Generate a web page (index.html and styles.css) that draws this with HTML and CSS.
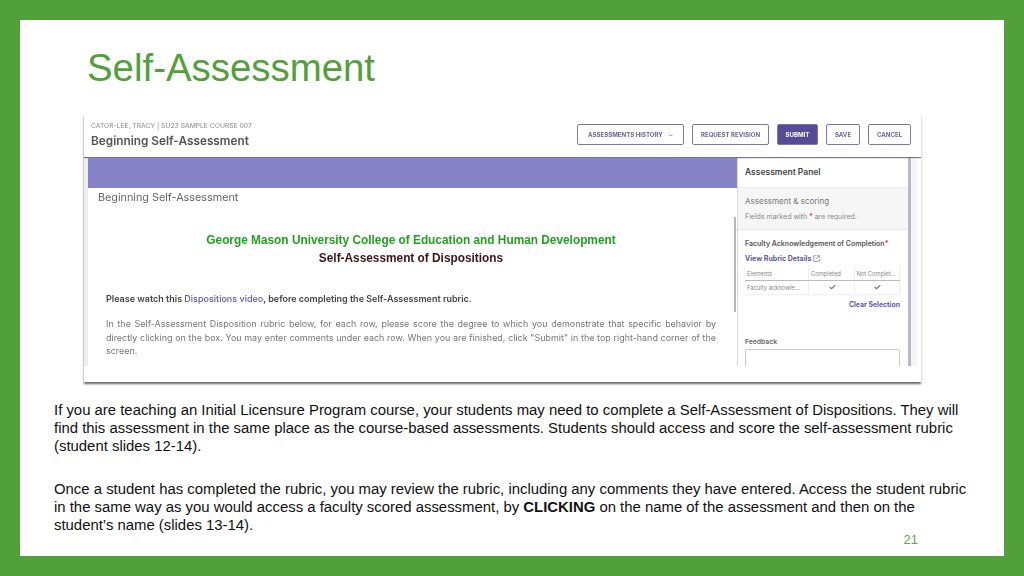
FILE: index.html
```html
<!DOCTYPE html>
<html lang="en">
<head>
    <meta charset="UTF-8">
    <title>Self-Assessment</title>
    <link rel="stylesheet" href="styles.css">
</head>
<body>

<div class="slide">
    <h1 class="slide-title">Self-Assessment</h1>

    <!-- Screenshot of the assessment page -->
    <div class="shot">
        <div class="shot-top">
            <div class="shot-names">
                <div class="crumb">CATOR-LEE, TRACY | SU23 SAMPLE COURSE 007</div>
                <div class="shot-heading">Beginning Self-Assessment</div>
            </div>
            <div class="actions">
                <span class="btn btn-history">ASSESSMENTS HISTORY <i class="caret">~</i></span>
                <span class="btn btn-revision">REQUEST REVISION</span>
                <span class="btn btn-submit">SUBMIT</span>
                <span class="btn btn-save">SAVE</span>
                <span class="btn btn-cancel">CANCEL</span>
            </div>
        </div>

        <div class="shot-body">
            <div class="main">
                <div class="purple-bar"></div>
                <div class="main-title">Beginning Self-Assessment</div>
                <div class="gmu">George Mason University College of Education and Human Development</div>
                <div class="gmu-sub">Self-Assessment of Dispositions</div>
                <p class="watch">Please watch this <span class="link">Dispositions video</span>, before completing the Self-Assessment rubric.</p>
                <p class="intro">In the Self-Assessment Disposition rubric below, for each row, please score the degree to which you demonstrate that specific behavior by directly clicking on the box. You may enter comments under each row. When you are finished, click "Submit" in the top right-hand corner of the screen.</p>
                <div class="scroll-thumb"></div>
            </div>

            <div class="panel">
                <div class="panel-title">Assessment Panel</div>
                <div class="panel-head">
                    <div class="panel-sub">Assessment &amp; scoring</div>
                    <div class="panel-note">Fields marked with <span class="req">*</span> are required.</div>
                </div>
                <div class="panel-body">
                    <div class="ack">Faculty Acknowledgement of Completion<span class="req">*</span></div>
                    <div class="rubric-link">View Rubric Details
                        <svg class="ext" viewBox="0 0 10 10" width="7" height="7"><path d="M4 1H1v8h8V6M5.5 1H9v3.5M9 1L4.5 5.5" fill="none" stroke="#77778a" stroke-width="1"/></svg>
                    </div>
                    <table class="rubric">
                        <thead>
                            <tr><th class="col-name">Elements</th><th>Completed</th><th>Not Complet...</th></tr>
                        </thead>
                        <tbody>
                            <tr>
                                <td>Faculty acknowle...</td>
                                <td class="tick"><svg viewBox="0 0 10 8" width="7" height="6"><path d="M1 4l2.5 2.5L9 1.5" fill="none" stroke="#777" stroke-width="1.8"/></svg></td>
                                <td class="tick"><svg viewBox="0 0 10 8" width="7" height="6"><path d="M1 4l2.5 2.5L9 1.5" fill="none" stroke="#777" stroke-width="1.8"/></svg></td>
                            </tr>
                        </tbody>
                    </table>
                    <div class="clear">Clear Selection</div>
                    <div class="feedback-label">Feedback</div>
                    <div class="feedback-box"></div>
                </div>
            </div>
            <div class="panel-edge"></div>
        </div>
    </div>

    <!-- Slide text -->
    <div class="copy">
        <p>If you are teaching an Initial Licensure Program course, your students may need to complete a Self-Assessment of Dispositions. They will find this assessment in the same place as the course-based assessments. Students should access and score the self-assessment rubric (student slides 12-14).</p>
        <p>Once a student has completed the rubric, you may review the rubric, including any comments they have entered. Access the student rubric in the same way as you would access a faculty scored assessment, by <b>CLICKING</b> on the name of the assessment and then on the student’s name (slides 13-14).</p>
    </div>
    <div class="page-num">21</div>
</div>

</body>
</html>
```

FILE: styles.css
```css
html, body {
    margin: 0;
    padding: 0;
}
body {
    width: 1024px;
    height: 576px;
    overflow: hidden;
    background-color: #52a03a;
    font-family: "Liberation Sans", Arial, sans-serif;
}
.slide {
    box-sizing: border-box;
    width: 984px;
    height: 536px;
    margin: 20px;
    background-color: white;
    padding-top: 24px;
    position: relative;
}
.slide-title {
    margin: 0 0 0 67px;
    font-size: 38.4px;
    font-weight: normal;
    line-height: 48px;
    color: #52a03a;
}

/* screenshot */
.shot {
    box-sizing: border-box;
    width: 839px;
    height: 266px;
    margin: 24px 0 0 63px;
    background-color: white;
    border-left: 1px solid #d0d0d4;
    border-right: 1px solid #e4e4e8;
    box-shadow: 0 3px 2px -1px #666;
    font-family: Inter, "Liberation Sans", sans-serif;
    overflow: hidden;
    filter: blur(0.3px);
}
.shot-top {
    height: 41px;
    padding: 0 10px 0 7px;
    display: flex;
    justify-content: space-between;
    align-items: flex-start;
    box-shadow: 0 1px 1px #77778a;
    position: relative;
}
.shot-names {
    padding-top: 5px;
}
.crumb {
    font-size: 6.75px;
    color: #8a8a8a;
    line-height: 9px;
    margin-bottom: 4px;
}
.shot-heading {
    font-size: 11.8px;
    font-weight: 600;
    color: #555;
    line-height: 15px;
}
.actions {
    display: flex;
    gap: 8px;
    align-items: center;
    margin-top: 8px;
}
.btn {
    box-sizing: border-box;
    display: flex;
    align-items: center;
    justify-content: center;
    height: 21px;
    border: 1px solid #7d78a8;
    border-radius: 2px;
    font-size: 6.1px;
    font-weight: 700;
    color: #6a65a2;
    white-space: nowrap;
}
.btn-history { width: 107px; }
.btn-revision { width: 77px; }
.btn-submit {
    width: 41px;
    background-color: #544c94;
    color: white;
}
.btn-save { width: 34px; }
.btn-cancel { width: 43px; }
.caret {
    font-style: normal;
    margin-left: 6px;
    color: #888;
}
.shot-body {
    display: flex;
    height: 208px;
    margin-top: 1px;
    border-left: 4px solid #eeeef0;
    overflow: hidden;
}
.main {
    width: 649px;
    flex-shrink: 0;
    position: relative;
}
.purple-bar {
    height: 30px;
    background-color: #8882c6;
}
.main-title {
    font-size: 10.8px;
    color: #666;
    padding: 3px 0 0 10px;
    line-height: 14px;
}
.gmu, .gmu-sub {
    font-family: "Liberation Sans", Arial, sans-serif;
    font-size: 11.85px;
    font-weight: bold;
    text-align: center;
    line-height: 16px;
    padding-right: 3px;
}
.gmu {
    color: #22a022;
    margin-top: 27px;
}
.gmu-sub {
    color: #3a1518;
    margin-top: 2px;
}
.watch {
    margin: 27px 18px 0 18px;
    font-size: 9px;
    font-weight: 600;
    color: #444;
    line-height: 12px;
}
.link {
    color: #5f58a8;
    font-weight: 500;
}
.intro {
    margin: 12px 21px 0 18px;
    font-size: 8.95px;
    color: #777;
    line-height: 13.5px;
    text-align: justify;
}
.scroll-thumb {
    position: absolute;
    right: 1px;
    top: 59px;
    width: 2px;
    height: 95px;
    background-color: #b8b8bc;
}
.panel {
    box-sizing: border-box;
    width: 171px;
    flex-shrink: 0;
    background-color: white;
    border-left: 1px solid #d8d8dc;
}
.panel-title {
    box-sizing: border-box;
    height: 29px;
    font-size: 8.5px;
    font-weight: 600;
    color: #444;
    padding: 7px 7px 0;
    line-height: 14px;
}
.panel-head {
    background-color: #f6f6f7;
    border-top: 1px solid #eee;
    border-bottom: 1px solid #e8e8e8;
    padding: 6px 7px 0;
    height: 35px;
}
.panel-sub {
    font-size: 8px;
    color: #777;
    line-height: 14px;
}
.panel-note {
    font-size: 7px;
    color: #888;
    line-height: 12px;
    margin-top: 3px;
}
.req {
    color: #d02030;
}
.panel-body {
    padding: 9px 7px 0;
}
.ack {
    font-size: 7px;
    font-weight: 600;
    color: #555;
    line-height: 10px;
}
.rubric-link {
    font-size: 7px;
    font-weight: 700;
    color: #5f58a8;
    margin-top: 5px;
    line-height: 10px;
}
.ext {
    vertical-align: -1px;
}
.rubric {
    width: 155px;
    border-collapse: collapse;
    margin-top: 2px;
    table-layout: fixed;
    box-shadow: 0 1px 2px #eee;
}
.rubric .col-name {
    width: 61px;
}
.rubric th, .rubric td {
    font-size: 5.8px;
    font-weight: normal;
    color: #888;
    text-align: left;
    padding: 0 0 0 2px;
    height: 14px;
    white-space: nowrap;
    overflow: hidden;
    border-right: 1px solid #efefef;
}
.rubric th {
    border-bottom: 1px solid #bbb;
}
.rubric td {
    height: 13px;
}
.rubric .tick {
    text-align: center;
}
.clear {
    font-size: 6.9px;
    font-weight: 700;
    color: #5f58a8;
    text-align: right;
    width: 155px;
    margin-top: 6px;
    line-height: 10px;
}
.feedback-label {
    font-size: 6.8px;
    font-weight: 600;
    color: #666;
    margin-top: 27px;
    line-height: 10px;
}
.feedback-box {
    box-sizing: border-box;
    width: 155px;
    height: 30px;
    margin-top: 2px;
    border: 1px solid #ccc;
    border-radius: 2px 2px 0 0;
}
.panel-edge {
    width: 3px;
    flex-shrink: 0;
    background-color: #b8b8c8;
    border-right: 6px solid #f5f5f7;
}

/* slide text */
.copy {
    margin: 19px 30px 0 34px;
    font-size: 14.9px;
    line-height: 18px;
    color: #111;
}
.copy p {
    margin: 0 0 25px;
}
.page-num {
    position: absolute;
    right: 86px;
    bottom: 9px;
    font-size: 13px;
    color: #62a652;
}
```
